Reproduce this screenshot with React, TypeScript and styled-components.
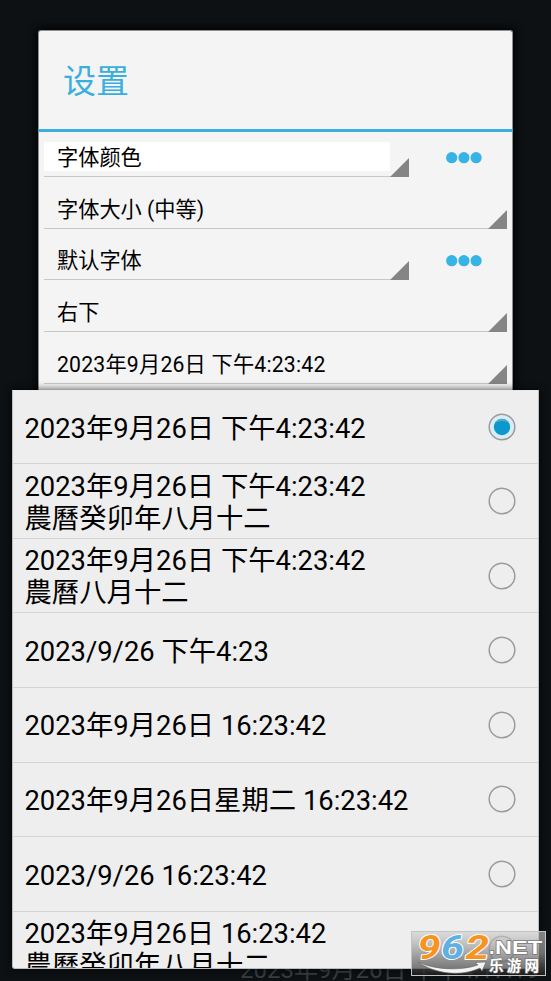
import React from "react";
import styled, { createGlobalStyle } from "styled-components";

const Global = createGlobalStyle`
  * { box-sizing: border-box; }
  html, body { margin: 0; padding: 0; }
  body { background: #0d1114; overflow: hidden; }
`;

const Screen = styled.main`
  position: relative;
  width: 551px;
  height: 981px;
  padding: 30px 38px 0;
  overflow: hidden;
  background: #0d1114;
  color: #000;
  font-family: Roboto, "Noto Sans CJK SC", sans-serif;
`;

const Dialog = styled.section`
  width: 475px;
  height: 900px;
  border: 1px solid #8d8f90;
  border-bottom: 0;
  border-radius: 3px;
  background: #f4f4f4;
  box-shadow: 0 0 8px 2px #000;
`;

const Title = styled.h1`
  display: flex;
  align-items: center;
  height: 101px;
  margin: 0 -1px;
  padding: 0 0 2px 25px;
  border-bottom: 3px solid #3bafdc;
  color: #3bafdc;
  font-size: 33px;
  font-weight: 400;
`;

const Settings = styled.div`
  display: flex;
  flex-direction: column;
  padding: 0 5px;
`;

const Setting = styled.div`
  display: flex;
  height: 51.65px;
  align-items: flex-start;
`;

const Spinner = styled.div<{ $short?: boolean }>`
  display: flex;
  position: relative;
  width: ${(p) => (p.$short ? "365px" : "463px")};
  height: 45px;
  padding-top: 10px;
  border-bottom: 1px solid #c8c8c8;
`;

const Value = styled.span<{ $filled?: boolean; $spaced?: boolean }>`
  display: flex;
  align-items: center;
  width: 346px;
  height: 29px;
  padding: 0 0 2px 13px;
  font-size: 21.2px;
  letter-spacing: ${(p) => (p.$spaced ? "0.21px" : "0")};
  white-space: pre;
  background: ${(p) => (p.$filled ? "#fff" : "transparent")};
`;

const Corner = styled.svg`
  position: absolute;
  right: 0;
  bottom: -1px;
  width: 19px;
  height: 19px;
`;

const More = styled.div`
  margin: 20px 0 0 37px;
  line-height: 0;
`;

const Popup = styled.ul`
  position: absolute;
  left: 12px;
  top: 390px;
  width: 527px;
  height: 579px;
  margin: 0;
  padding: 0;
  overflow: hidden;
  list-style: none;
  background: #eee;
  border: 1px solid #bdbdbd;
  border-top-color: #e8e8e8;
  border-radius: 1px 1px 3px 3px;
  box-shadow: 0 0 7px 1px rgba(0, 0, 0, 0.6);
`;

const Option = styled.li`
  display: flex;
  align-items: center;
  justify-content: space-between;
  height: 74.6px;
  padding: 0 22px 0 11.5px;
  border-bottom: 1px solid #d4d4d4;
  font-size: 27.35px;
  line-height: 32px;

  &:first-child {
    height: 73.2px;
  }
`;

const Label = styled.span`
  padding-top: 3.4px;
  white-space: pre;
`;

const RadioIcon = styled.svg`
  flex: none;
  width: 28px;
  height: 28px;
`;

const Clock = styled.div`
  position: absolute;
  left: 240px;
  top: 955px;
  font-size: 24px;
  line-height: 30px;
  color: #3a3d3f;
  white-space: pre;
`;

const Badge = styled.svg`
  position: absolute;
  left: 411px;
  top: 931px;
  width: 135px;
  height: 45px;
`;

const settings = [
  { text: "字体颜色", more: true, filled: true },
  { text: "字体大小 (中等)" },
  { text: "默认字体", more: true },
  { text: "右下" },
  { text: "2023年9月26日 下午4:23:42", spaced: true },
];

const options = [
  "2023年9月26日 下午4:23:42",
  "2023年9月26日 下午4:23:42\n農曆癸卯年八月十二",
  "2023年9月26日 下午4:23:42\n農曆八月十二",
  "2023/9/26 下午4:23",
  "2023年9月26日 16:23:42",
  "2023年9月26日星期二 16:23:42",
  "2023/9/26 16:23:42",
  "2023年9月26日 16:23:42\n農曆癸卯年八月十二",
];

function Radio({ on }: { on: boolean }) {
  return (
    <RadioIcon viewBox="0 0 28 28">
      <circle cx="14" cy="14" r="12.8" fill={on ? "#d8edf5" : "none"} stroke="#9b9b9b" strokeWidth="1.5" />
      {on && (
        <>
          <circle cx="14" cy="14" r="8.2" fill="#0a98cf" />
          <path d="M6.9 10a8.2 8.2 0 0 1 14.2 0Q14 5.8 6.9 10Z" fill="#5aa9c6" />
        </>
      )}
    </RadioIcon>
  );
}

function Dots() {
  return (
    <More>
      <svg width="37" height="12" viewBox="0 0 37 12" fill="#35b4e5">
        <circle cx="5.7" cy="5.7" r="5.6" />
        <circle cx="17.9" cy="5.7" r="5.6" />
        <circle cx="30.1" cy="5.7" r="5.6" />
      </svg>
    </More>
  );
}

function SiteBadge() {
  return (
    <Badge viewBox="0 0 135 45">
      <defs>
        <linearGradient id="plate" x1="0" y1="0" x2="0" y2="1">
          <stop offset="0" stopColor="#d0d0d0" stopOpacity="0.6" />
          <stop offset="0.5" stopColor="#8d8d8d" stopOpacity="0.75" />
          <stop offset="0.8" stopColor="#4e4e4e" stopOpacity="0.7" />
          <stop offset="1" stopColor="#1c1e1f" stopOpacity="0.7" />
        </linearGradient>
      </defs>
      <rect x="0.5" y="0.5" width="134" height="44" fill="url(#plate)" stroke="#c4c4c4" />
      <g
        fontFamily="Roboto, sans-serif"
        fontWeight="700"
        fontStyle="italic"
        fontSize="33"
        stroke="#fff"
        strokeWidth="1.8"
        strokeLinejoin="round"
        paintOrder="stroke"
      >
        <text x="6.5" y="27.5" textLength="23" lengthAdjust="spacingAndGlyphs" fill="#f7931e">9</text>
        <text x="30" y="27.5" textLength="23" lengthAdjust="spacingAndGlyphs" fill="#61b0e4">6</text>
        <text x="54.5" y="27.5" textLength="23.5" lengthAdjust="spacingAndGlyphs" fill="#f7931e">2</text>
      </g>
      <path
        d="M7 31C24 39 50 40 67 34L64 31.5L75 31L71 40L69 37C50 46 24 43 7 31Z"
        fill="#f4f4f4"
        stroke="#666"
        strokeWidth="0.6"
      />
      <g fill="#fff" stroke="#777" strokeWidth="1.4" paintOrder="stroke" fontWeight="700">
        <text x="78" y="22.5" fontFamily="Liberation Sans, sans-serif" fontSize="19.5">.</text>
        <text x="84" y="22.5" fontFamily="Liberation Sans, sans-serif" fontSize="19" textLength="47" lengthAdjust="spacingAndGlyphs">NET</text>
        <text x="78" y="40" fontFamily="Noto Sans CJK SC, sans-serif" fontSize="14.5" textLength="50">乐游网</text>
      </g>
    </Badge>
  );
}

export default function App() {
  return (
    <Screen>
      <Global />
      <Dialog>
        <Title>设置</Title>
        <Settings>
          {settings.map((s) => (
            <Setting key={s.text}>
              <Spinner $short={s.more}>
                <Value $filled={s.filled} $spaced={s.spaced}>{s.text}</Value>
                <Corner viewBox="0 0 19 19">
                  <path d="M19 0V19H0Z" fill="#858585" />
                </Corner>
              </Spinner>
              {s.more && <Dots />}
            </Setting>
          ))}
        </Settings>
      </Dialog>
      <Clock>2023年9月26日 下午4:17:19</Clock>
      <Popup>
        {options.map((text, i) => (
          <Option key={text}>
            <Label>{text}</Label>
            <Radio on={i === 0} />
          </Option>
        ))}
      </Popup>
      <SiteBadge />
    </Screen>
  );
}
